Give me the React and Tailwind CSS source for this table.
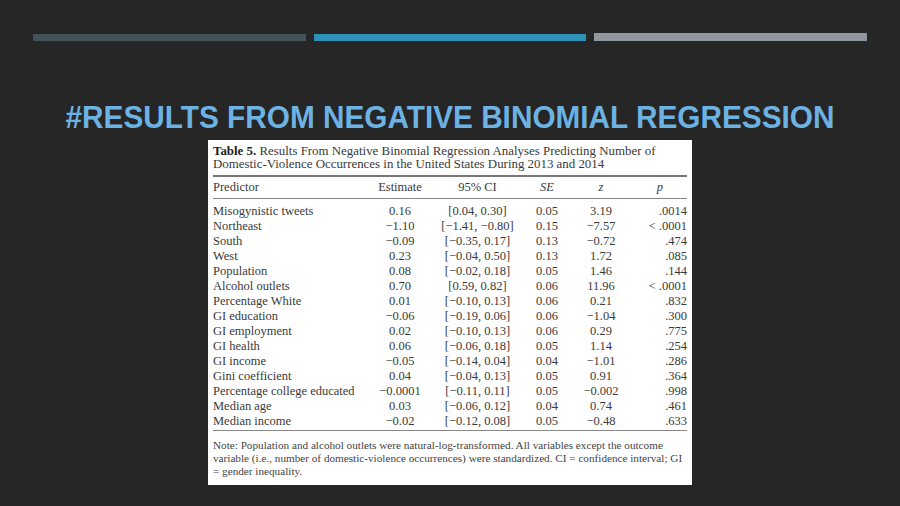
import React from "react";

const rows = [
    ["Misogynistic tweets", "0.16", "[0.04, 0.30]", "0.05", "3.19", ".0014"],
    ["Northeast", "−1.10", "[−1.41, −0.80]", "0.15", "−7.57", "< .0001"],
    ["South", "−0.09", "[−0.35, 0.17]", "0.13", "−0.72", ".474"],
    ["West", "0.23", "[−0.04, 0.50]", "0.13", "1.72", ".085"],
    ["Population", "0.08", "[−0.02, 0.18]", "0.05", "1.46", ".144"],
    ["Alcohol outlets", "0.70", "[0.59, 0.82]", "0.06", "11.96", "< .0001"],
    ["Percentage White", "0.01", "[−0.10, 0.13]", "0.06", "0.21", ".832"],
    ["GI education", "−0.06", "[−0.19, 0.06]", "0.06", "−1.04", ".300"],
    ["GI employment", "0.02", "[−0.10, 0.13]", "0.06", "0.29", ".775"],
    ["GI health", "0.06", "[−0.06, 0.18]", "0.05", "1.14", ".254"],
    ["GI income", "−0.05", "[−0.14, 0.04]", "0.04", "−1.01", ".286"],
    ["Gini coefficient", "0.04", "[−0.04, 0.13]", "0.05", "0.91", ".364"],
    ["Percentage college educated", "−0.0001", "[−0.11, 0.11]", "0.05", "−0.002", ".998"],
    ["Median age", "0.03", "[−0.06, 0.12]", "0.04", "0.74", ".461"],
    ["Median income", "−0.02", "[−0.12, 0.08]", "0.05", "−0.48", ".633"],
];

const cols = "grid grid-cols-[152px_70px_85px_54px_54px_59px]";

const App = () => {
    return (
        <div className="w-[900px] h-[506px] bg-[#262626] overflow-hidden flex flex-col">
            {/* top bars */}
            <div className="flex gap-[8px] px-[33px] pt-[34px]">
                <div className="flex-1 h-[7px] bg-[#44525a]"></div>
                <div className="flex-1 h-[7px] bg-[#2e91b8]"></div>
                <div className="flex-1 h-[8px] -mt-[1px] bg-[#8f969e]"></div>
            </div>

            {/* title */}
            <h1
                className="mt-[56px] text-center text-[32px] leading-[40px] font-bold text-[#6cb2e3] whitespace-nowrap scale-x-[0.93]"
                style={{ fontFamily: '"Liberation Sans", Arial, sans-serif' }}
            >
                #RESULTS FROM NEGATIVE BINOMIAL REGRESSION
            </h1>

            {/* table image */}
            <div
                className="mt-[3px] ml-[208px] w-[484px] h-[345px] bg-white px-[5px] pt-[5px] text-[#3a3a3a] text-[12.5px]"
                style={{ fontFamily: '"Liberation Serif", serif' }}
            >
                <div className="leading-[13px] text-[12.9px] whitespace-nowrap">
                    <span className="font-bold text-[#222]">Table 5.</span> Results From Negative Binomial Regression Analyses Predicting Number of
                    <br />
                    Domestic-Violence Occurrences in the United States During 2013 and 2014
                </div>
                <div className="mt-[4px] h-[2px] bg-[#777]"></div>
                <div className={`${cols} h-[21px] items-center`}>
                    <div>Predictor</div>
                    <div className="text-center">Estimate</div>
                    <div className="text-center">95% CI</div>
                    <div className="text-center italic">SE</div>
                    <div className="text-center italic">z</div>
                    <div className="text-right pr-[24px] italic">p</div>
                </div>
                <div className="h-px bg-[#888]"></div>
                <div className="pt-[5px] pb-[1px]">
                    {rows.map((r) => (
                        <div key={r[0]} className={`${cols} h-[15px] items-center leading-[15px]`}>
                            <div className="whitespace-nowrap">{r[0]}</div>
                            <div className="text-center">{r[1]}</div>
                            <div className="text-center whitespace-nowrap">{r[2]}</div>
                            <div className="text-center">{r[3]}</div>
                            <div className="text-center">{r[4]}</div>
                            <div className="text-right whitespace-nowrap">{r[5]}</div>
                        </div>
                    ))}
                </div>
                <div className="h-px bg-[#888]"></div>
                <div className="pt-[8px] text-[11.2px] leading-[13px] text-[#444] whitespace-nowrap">
                    Note: Population and alcohol outlets were natural-log-transformed. All variables except the outcome
                    <br />
                    variable (i.e., number of domestic-violence occurrences) were standardized. CI = confidence interval; GI
                    <br />= gender inequality.
                </div>
            </div>
        </div>
    );
};

export default App;
